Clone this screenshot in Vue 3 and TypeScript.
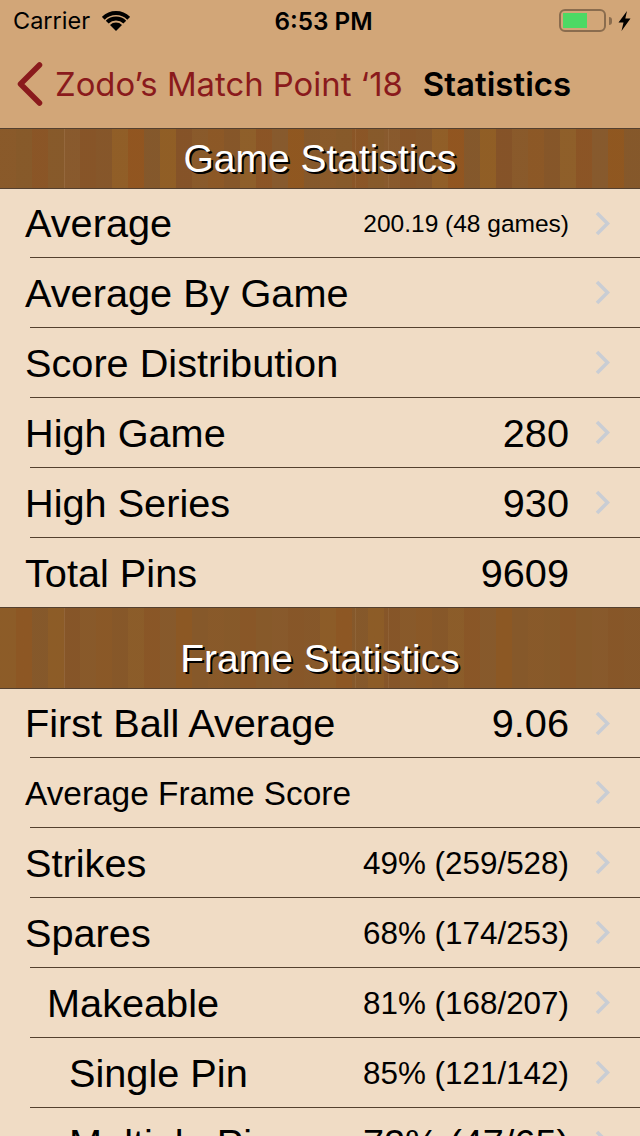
<script setup lang="ts">
interface StatRow {
  label: string;
  value?: string;
  indent?: number;
  arrow?: boolean;
  small?: boolean;
  valueSize?: "tight" | "medium" | "small";
}

const gameRows: StatRow[] = [
  { label: "Average", value: "200.19 (48 games)", valueSize: "small", arrow: true },
  { label: "Average By Game", arrow: true },
  { label: "Score Distribution", arrow: true },
  { label: "High Game", value: "280", arrow: true },
  { label: "High Series", value: "930", arrow: true },
  { label: "Total Pins", value: "9609" },
];

const frameRows: StatRow[] = [
  { label: "First Ball Average", value: "9.06", arrow: true },
  { label: "Average Frame Score", small: true, arrow: true },
  { label: "Strikes", value: "49% (259/528)", valueSize: "medium", arrow: true },
  { label: "Spares", value: "68% (174/253)", valueSize: "medium", arrow: true },
  { label: "Makeable", value: "81% (168/207)", valueSize: "medium", indent: 1, arrow: true },
  { label: "Single Pin", value: "85% (121/142)", valueSize: "medium", indent: 2, arrow: true },
  { label: "Multiple Pins", value: "72% (47/65)", valueSize: "tight", indent: 2, arrow: true },
];

// plank colours for the wood strip, 16px boards
const planks = [
  "#8a5a2a", "#875a2a", "#8b5526", "#875a2b", "#895a2e", "#875428", "#86562a", "#925f27",
  "#93551f", "#84582c", "#925f25", "#855228", "#8a5a2b", "#8d5826", "#865629", "#90602a",
  "#8c5425", "#875a2e", "#91571f", "#85582b",
];

function wood(offset: number, calm: number): string {
  const stops: string[] = [];
  for (let i = 0; i < 40; i++) {
    const c = planks[(i + offset) % planks.length];
    stops.push(`${c} ${i * 16}px ${(i + 1) * 16}px`);
  }
  const veil = `rgba(135, 89, 41, ${calm})`;
  const seams = "linear-gradient(90deg, transparent 64px, rgba(255,230,200,.1) 64px 65px, transparent 65px 355px, rgba(255,230,200,.08) 355px 356px, transparent 356px 388px, rgba(255,230,200,.08) 388px 389px, transparent 389px)";
  return `${seams}, linear-gradient(${veil}, ${veil}), linear-gradient(90deg, ${stops.join(", ")})`;
}
</script>

<template>
  <div class="screen">
    <header class="top">
      <div class="status">
        <div class="status-left">
          <span>Carrier</span>
          <svg width="28" height="20" viewBox="0 0 28 20">
            <path d="M1.3 7.3A18 18 0 0 1 26.7 7.3" fill="none" stroke="#000" stroke-width="4" />
            <path d="M5.2 11.2A12.5 12.5 0 0 1 22.8 11.2" fill="none" stroke="#000" stroke-width="4" />
            <path d="M8 14A8.5 8.5 0 0 1 20 14L14 20Z" fill="#000" />
          </svg>
        </div>
        <div class="time">6:53 PM</div>
        <div class="status-right">
          <div class="battery"><div class="charge"></div></div>
          <div class="nub"></div>
          <svg width="13" height="20" viewBox="0 0 13 20">
            <path d="M9 0L0.5 11.5H5.5L3.5 20L12.5 7.5H7.3Z" fill="#000" />
          </svg>
        </div>
      </div>
      <nav class="nav">
        <svg class="back" width="26" height="44" viewBox="0 0 26 44">
          <path d="M22.5 3L3.5 22L22.5 41" fill="none" stroke="#8a1a1c" stroke-width="5.5" stroke-linecap="round" stroke-linejoin="round" />
        </svg>
        <span class="back-text">Zodo’s Match Point ‘18</span>
        <span class="nav-title">Statistics</span>
      </nav>
    </header>

    <div class="section-head" :style="{ backgroundImage: wood(0, 0.15) }">Game Statistics</div>
    <ul class="rows">
      <li v-for="row in gameRows" :key="row.label" class="row" :class="`indent-${row.indent ?? 0}`">
        <span class="label" :class="{ small: row.small }">{{ row.label }}</span>
        <span v-if="row.value" class="value" :class="row.valueSize">{{ row.value }}</span>
        <svg v-if="row.arrow" class="arrow" width="15" height="25" viewBox="0 0 15 25">
          <path d="M2 2L12.5 12.5L2 23" fill="none" stroke="#c9cdd4" stroke-width="3.6" />
        </svg>
      </li>
    </ul>

    <div class="section-head tall" :style="{ backgroundImage: wood(7, 0.5) }">Frame Statistics</div>
    <ul class="rows">
      <li v-for="row in frameRows" :key="row.label" class="row" :class="`indent-${row.indent ?? 0}`">
        <span class="label" :class="{ small: row.small }">{{ row.label }}</span>
        <span v-if="row.value" class="value" :class="row.valueSize">{{ row.value }}</span>
        <svg v-if="row.arrow" class="arrow" width="15" height="25" viewBox="0 0 15 25">
          <path d="M2 2L12.5 12.5L2 23" fill="none" stroke="#c9cdd4" stroke-width="3.6" />
        </svg>
      </li>
    </ul>
  </div>
</template>

<style scoped>
.screen {
  width: 640px;
  height: 1136px;
  overflow: hidden;
  background: #f0dcc5;
  font-family: "Liberation Sans", Arial, sans-serif;
  color: #000;
}

.top {
  height: 128px;
  background: #d2a678;
  font-family: Inter, "Liberation Sans", sans-serif;
}

.status {
  display: flex;
  align-items: center;
  justify-content: space-between;
  box-sizing: border-box;
  height: 40px;
  padding: 1px 9px 0 13px;
  font-size: 23.5px;
}

.status-left {
  display: flex;
  align-items: center;
  gap: 12px;
  width: 200px;
}

.time {
  margin-left: 3px;
  font-weight: 600;
  font-size: 24.3px;
}

.status-right {
  display: flex;
  align-items: center;
  justify-content: flex-end;
  width: 200px;
}

.battery {
  width: 47px;
  height: 23px;
  box-sizing: border-box;
  padding: 2px;
  border: 2px solid #8a6c4e;
  border-radius: 6px;
}

.charge {
  width: 24px;
  height: 100%;
  background: #4cd964;
}

.nub {
  width: 3px;
  height: 8px;
  margin: 0 6px 0 3px;
  background: #8a6c4e;
  border-radius: 0 3px 3px 0;
}

.nav {
  display: flex;
  align-items: center;
  height: 88px;
  padding-left: 17px;
  font-size: 33px;
  white-space: nowrap;
}

.back-text {
  margin-left: 12px;
  font-size: 32.85px;
  color: #8a1a1c;
}

.nav-title {
  margin-left: 20px;
  font-weight: 600;
}

.section-head {
  display: flex;
  align-items: center;
  justify-content: center;
  box-sizing: border-box;
  height: 61px;
  border-top: 1px solid #54402f;
  border-bottom: 1px solid #54402f;
  color: #fff;
  font-size: 39px;
  text-shadow: 2px 2px 0 #000;
}

.section-head.tall {
  height: 82px;
  padding-top: 21px;
}

.rows {
  margin: 0;
  padding: 0;
  list-style: none;
}

.row {
  position: relative;
  display: flex;
  align-items: center;
  box-sizing: border-box;
  height: 70px;
  padding: 1px 71px 0 25px;
  background: linear-gradient(#54402f, #54402f) 30px 100% / 610px 1px no-repeat;
}

.row:first-child {
  height: 69px;
  padding-top: 0;
}

.row:last-child {
  height: 69px;
  background: none;
}

.indent-1 {
  padding-left: 47px;
}

.indent-2 {
  padding-left: 69px;
}

.label {
  flex: 1;
  font-size: 39.7px;
  white-space: nowrap;
}

.label.small {
  font-size: 33.4px;
}

.value {
  font-size: 39.7px;
  white-space: nowrap;
}

.value.tight {
  font-size: 37.8px;
}

.value.medium {
  font-size: 31.4px;
}

.value.small {
  font-size: 24.5px;
}

/* sits in the accessory column, right of the value */
.arrow {
  position: absolute;
  left: 595px;
  top: 22px;
}
</style>
